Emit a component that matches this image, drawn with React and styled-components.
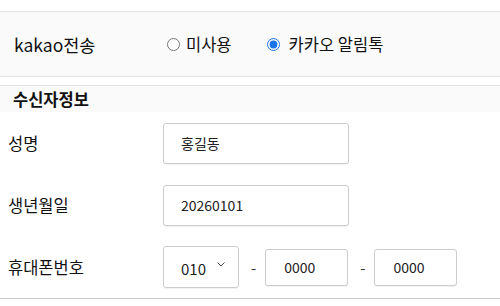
import React, { useState } from "react";
import styled, { createGlobalStyle } from "styled-components";

const GlobalStyle = createGlobalStyle`
    body {
        margin: 0;
        background: #ffffff;
        font-family: "Noto Sans CJK KR", "Noto Sans", sans-serif;
        color: #111111;
    }
`;

const Page = styled.div`
    padding-top: 11px;
    width: 500px;
`;

const KakaoRow = styled.div`
    display: flex;
    align-items: center;
    height: 64px;
    padding-left: 14px;
    background-color: #fafafa;
    border-top: 1px solid #e2e2e2;
    border-bottom: 1px solid #e2e2e2;
`;

const KakaoLabel = styled.span`
    width: 153px;
    font-size: 17.5px;
    color: #111111;
`;

const RadioGroup = styled.div`
    display: flex;
    align-items: center;
`;

const RadioLabel = styled.label`
    display: flex;
    align-items: center;
    gap: ${({ $gap }) => $gap}px;
    margin-right: ${({ $right }) => $right}px;
    font-size: 16.5px;
    color: #111111;
`;

const Radio = styled.input`
    width: 13px;
    height: 13px;
    margin: 0;
    accent-color: #1a73e8;
`;

const SectionHeader = styled.div`
    margin-top: 8px;
    height: 26px;
    display: flex;
    align-items: center;
    padding-left: 13px;
    background-color: #fafafa;
    border-top: 1px solid #e2e2e2;
    font-size: 16.5px;
    font-weight: 700;
    color: #111111;
`;

const Form = styled.div`
    border-bottom: 1px solid #c8c8c8;
    box-shadow: 0 1px 0 #a9a9d2;
`;

const Row = styled.div`
    display: flex;
    align-items: center;
    height: 62px;
    padding-left: 8px;
`;

const Label = styled.span`
    width: 155px;
    font-size: 16.5px;
    color: #111111;
`;

const TextInput = styled.input`
    box-sizing: border-box;
    width: ${({ $w }) => $w}px;
    height: ${({ $h }) => $h}px;
    padding: 0 0 0 ${({ $pad }) => $pad}px;
    border: 1px solid #cccccc;
    border-radius: 3px;
    box-shadow: 0 1px 1px rgba(0, 0, 0, 0.06);
    font-family: "Noto Sans CJK KR", "Noto Sans", sans-serif;
    font-size: 14px;
    color: #222222;
    outline: none;
`;

const SelectBox = styled.div`
    box-sizing: border-box;
    width: 76px;
    height: 42px;
    display: flex;
    align-items: center;
    padding-left: 17px;
    border: 1px solid #cccccc;
    border-radius: 3px;
    box-shadow: 0 1px 1px rgba(0, 0, 0, 0.06);
    font-size: 15px;
    color: #222222;
`;

const SelectValue = styled.span`
    margin-top: 3px;
`;

const Chevron = styled.svg`
    margin-left: 11px;
    margin-top: -6px;
`;

const Dash = styled.span`
    margin: 0 9px 0 12px;
    font-size: 15px;
    color: #333333;
`;

export default function App() {
    const [kakao, setKakao] = useState("alim");

    return (
        <Page>
            <GlobalStyle />
            <KakaoRow>
                <KakaoLabel>kakao전송</KakaoLabel>
                <RadioGroup>
                    <RadioLabel $gap={6} $right={35}>
                        <Radio
                            type="radio"
                            name="kakao"
                            checked={kakao === "none"}
                            onChange={() => setKakao("none")}
                        />
                        미사용
                    </RadioLabel>
                    <RadioLabel $gap={9} $right={0}>
                        <Radio
                            type="radio"
                            name="kakao"
                            checked={kakao === "alim"}
                            onChange={() => setKakao("alim")}
                        />
                        카카오 알림톡
                    </RadioLabel>
                </RadioGroup>
            </KakaoRow>

            <SectionHeader>수신자정보</SectionHeader>

            <Form>
                <Row>
                    <Label>성명</Label>
                    <TextInput $w={186} $h={41} $pad={17} defaultValue="홍길동" />
                </Row>
                <Row>
                    <Label>생년월일</Label>
                    <TextInput $w={186} $h={41} $pad={17} defaultValue="20260101" />
                </Row>
                <Row>
                    <Label>휴대폰번호</Label>
                    <SelectBox>
                        <SelectValue>010</SelectValue>
                        <Chevron width="8" height="5" viewBox="0 0 8 5">
                            <path d="M0.5 0.5 L4 4 L7.5 0.5" fill="none" stroke="#444" strokeWidth="1" />
                        </Chevron>
                    </SelectBox>
                    <Dash>-</Dash>
                    <TextInput $w={83} $h={37} $pad={18} defaultValue="0000" />
                    <Dash>-</Dash>
                    <TextInput $w={83} $h={37} $pad={18} defaultValue="0000" />
                </Row>
            </Form>
        </Page>
    );
}
